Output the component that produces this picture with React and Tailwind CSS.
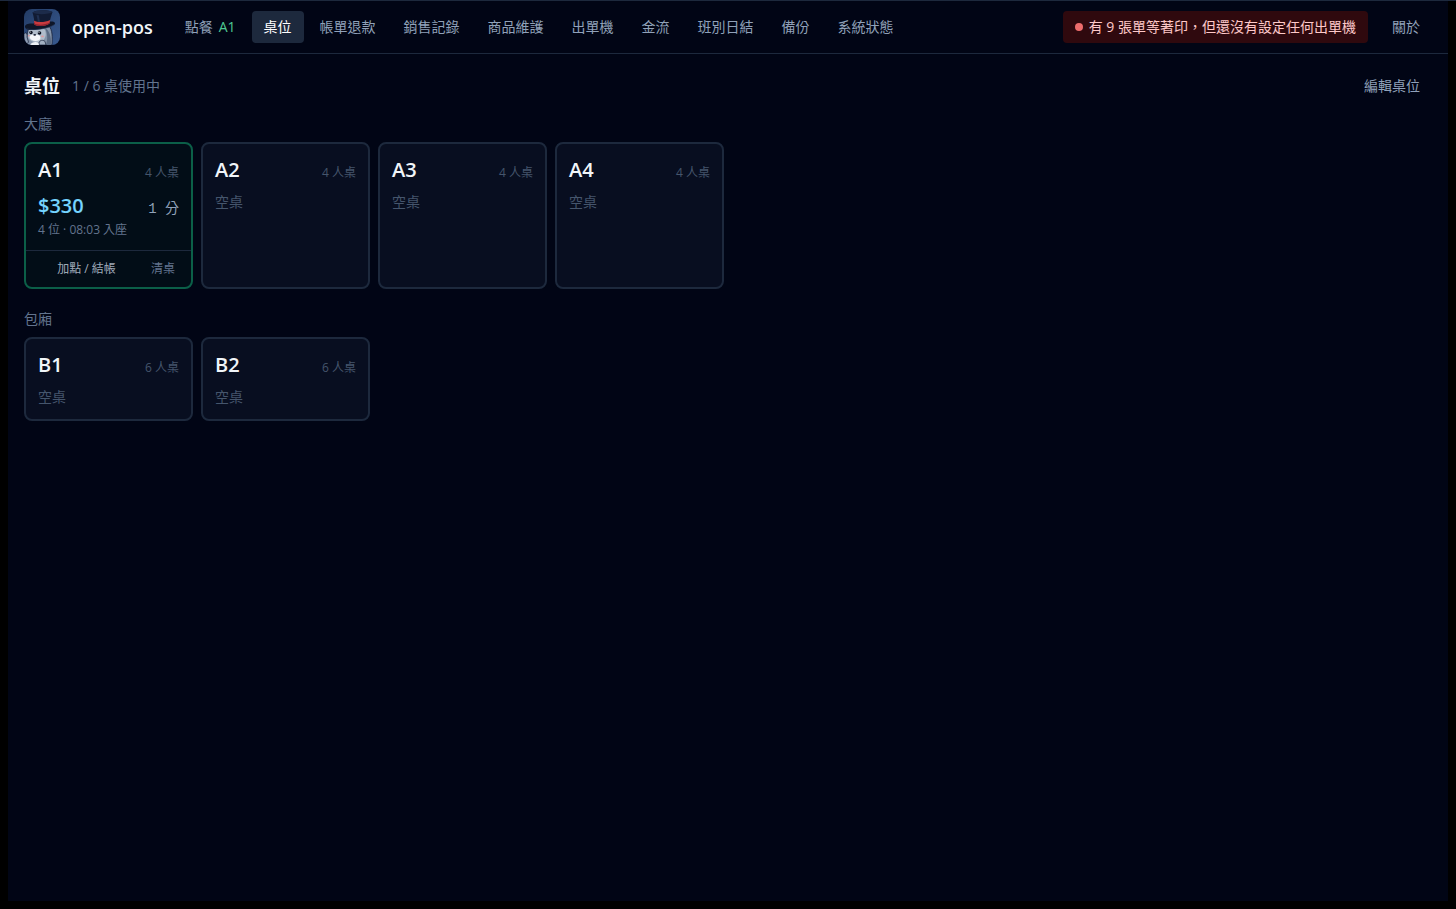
import React, { useState } from "react";

const navItems = [
  { id: "order", label: "點餐", tag: "A1" },
  { id: "tables", label: "桌位" },
  { id: "refund", label: "帳單退款" },
  { id: "sales", label: "銷售記錄" },
  { id: "products", label: "商品維護" },
  { id: "printers", label: "出單機" },
  { id: "cash", label: "金流" },
  { id: "shift", label: "班別日結" },
  { id: "backup", label: "備份" },
  { id: "status", label: "系統狀態" },
];

const areas = [
  {
    name: "大廳",
    tables: [
      { name: "A1", seats: 4, order: { total: 330, minutes: 1, guests: 4, since: "08:03" } },
      { name: "A2", seats: 4 },
      { name: "A3", seats: 4 },
      { name: "A4", seats: 4 },
    ],
  },
  {
    name: "包廂",
    tables: [
      { name: "B1", seats: 6 },
      { name: "B2", seats: 6 },
    ],
  },
];

function Logo() {
  return (
    <svg viewBox="0 0 36 36" className="size-9 shrink-0 rounded-lg" aria-hidden="true">
      <defs>
        <linearGradient id="sky" x1="0" y1="0" x2="1" y2="1">
          <stop offset="0" stopColor="#233c66" />
          <stop offset="1" stopColor="#38598f" />
        </linearGradient>
      </defs>
      <rect width="36" height="36" fill="url(#sky)" />
      {/* body and head */}
      <path d="M3 36 C2 29 3 22 6 18 L25 17 C28.500 21 28.500 28 28 36 Z" fill="#8493a9" stroke="#17213a" strokeWidth="0.800" />
      <path d="M21 19 C25 21 27.500 27 27 36 L22 36 C24 30 23.500 24 21 19 Z" fill="#5b6b84" />
      <path d="M5 20 C9 18 18 18 21 21 C23 26 21 31 17 32.500 C11 34 6 33 4 28 Z" fill="#b0bccb" />
      <path d="M5.500 28 C6.500 25.500 9.500 25 11 26.200 C13 25 16.500 26 16.500 29 C16 33 6.500 33 5.500 28 Z" fill="#f4f6fa" />
      <path d="M6 36 C8 32 15 32 17 36 Z" fill="#edf1f6" />
      {/* face */}
      <circle cx="7" cy="23.500" r="1.700" fill="#0b1122" />
      <circle cx="15.500" cy="24" r="1.800" fill="#0b1122" />
      <circle cx="6.600" cy="22.900" r="0.500" fill="#fff" />
      <circle cx="15" cy="23.400" r="0.500" fill="#fff" />
      <ellipse cx="10.700" cy="25.800" rx="1.400" ry="0.900" fill="#1a2136" />
      <ellipse cx="4.800" cy="26.800" rx="1.100" ry="0.800" fill="#e3989e" />
      <ellipse cx="18.500" cy="27.300" rx="1.400" ry="0.900" fill="#e3989e" />
      {/* paws */}
      <path d="M0 25 C2 22.500 3.500 24.500 3 28 L4.500 33 L3 35 C1 33 0 30 0 28 Z" fill="#8f9db2" stroke="#17213a" strokeWidth="0.700" />
      <path d="M15 34 C15.500 31 19 30.500 21 32.500 L22 36 L15.500 36 Z" fill="#a4b1c3" stroke="#17213a" strokeWidth="0.700" />
      {/* top hat */}
      <path d="M1 17.500 C1 15 5 14 9.500 14.500 L26 12.500 C30 12 32 13.500 30.500 15.500 C27 19 9 22.500 3 20.500 C1.500 19.500 1 18.500 1 17.500 Z" fill="#0e1629" />
      <path d="M8.500 3.500 C9.500 7 10.500 11 10.500 16 C14 18.500 22 18 25.500 14.500 C26 10 27.500 6 28.500 3 C25 0.500 12 0.500 8.500 3.500 Z" fill="#111b33" />
      <path d="M8.500 3.500 C12 0.800 25 0.500 28.500 3 C25 5.500 13 6 8.500 3.500 Z" fill="#1c2b4a" />
      <path d="M12.500 6 L14 12.800 L16 13 L14.800 6.300 Z" fill="#1f2f50" />
      <path d="M10 11.800 C14 13.800 21 13.500 26.200 11 L25.500 14.500 C21 17.500 14 17.800 10.500 15.800 Z" fill="#c93a3f" />
      <path d="M10.300 14.500 C14 16.300 21 16 25.700 13.500 L25.500 14.700 C21 17.500 14 17.800 10.500 15.800 Z" fill="#8f2430" />
      <path d="M2.500 19.800 C10 21.800 24 19.800 30 15.800" fill="none" stroke="#283a5d" strokeWidth="0.600" />
    </svg>
  );
}

function TableCard({ table }) {
  const { order } = table;

  const head = (
    <span className="flex items-baseline justify-between">
      <span className="text-xl leading-7 font-semibold text-slate-100">{table.name}</span>
      <span className="text-xs text-slate-600">{table.seats} 人桌</span>
    </span>
  );

  if (!order) {
    return (
      <button
        type="button"
        className="flex flex-col items-stretch gap-2 rounded-lg border-2 border-slate-800 bg-slate-900/50 p-3 text-left"
      >
        {head}
        <span className="text-sm text-slate-600">空桌</span>
      </button>
    );
  }

  return (
    <div className="rounded-lg border-2 border-[#0b5f48] bg-[#020d17]">
      <button type="button" className="block w-full p-3 text-left">
        {head}
        <span className="mt-2 flex items-baseline justify-between">
          <span className="text-xl leading-7 font-semibold text-sky-300">${order.total}</span>
          <span className="font-['Liberation_Mono','Noto_Sans_CJK_TC',monospace] text-sm text-slate-400">
            {order.minutes} 分
          </span>
        </span>
        <span className="mt-0.5 block text-xs text-slate-500">
          {order.guests} 位 · {order.since} 入座
        </span>
      </button>
      <div className="flex gap-3 border-t border-slate-800 px-3 text-xs">
        <button type="button" className="flex-1 py-2.5 text-slate-300/80">
          加點 / 結帳
        </button>
        <button type="button" className="px-1 py-2.5 text-slate-500">
          清桌
        </button>
      </div>
    </div>
  );
}

export default function App() {
  const [page, setPage] = useState("tables");

  const allTables = areas.flatMap((area) => area.tables);
  const inUse = allTables.filter((t) => t.order).length;

  return (
    <div className="flex min-h-screen flex-col border-t border-slate-800 bg-black px-2 pb-2 font-['Open_Sans','Noto_Sans_CJK_TC',sans-serif]">
      <div className="flex-1 bg-[#010515] text-slate-100">
        <header className="flex items-center border-b border-slate-800 px-4 py-2">
          <Logo />
          <span className="ml-3 text-lg font-semibold">open-pos</span>
          <nav className="ml-5 flex gap-1 text-sm">
            {navItems.map((item) => (
              <button
                key={item.id}
                type="button"
                onClick={() => setPage(item.id)}
                className={
                  page === item.id
                    ? "rounded bg-slate-800 px-3 py-1.5 whitespace-nowrap text-white"
                    : "rounded px-3 py-1.5 whitespace-nowrap text-slate-400"
                }
              >
                {item.label}
                {item.tag && <span className="ml-1.5 text-[#4fc993]">{item.tag}</span>}
              </button>
            ))}
          </nav>
          <div className="ml-auto flex items-center gap-3 text-sm whitespace-nowrap">
            <button
              type="button"
              className="flex items-center gap-1.5 rounded bg-[#2f090e] px-3 py-1.5 text-red-200"
            >
              <span className="size-2 rounded-full bg-[#ec6c6c]" />
              有 9 張單等著印，但還沒有設定任何出單機
            </button>
            <button type="button" className="px-3 py-1.5 text-slate-400">
              關於
            </button>
          </div>
        </header>

        <main className="p-4">
          <div className="flex items-center justify-between">
            <div className="flex items-center gap-3">
              <h1 className="text-lg font-bold">桌位</h1>
              <span className="text-sm text-slate-500">
                {inUse} / {allTables.length} 桌使用中
              </span>
            </div>
            <button type="button" className="px-3 py-1.5 text-sm text-slate-400">
              編輯桌位
            </button>
          </div>

          <div className="mt-3 space-y-5">
            {areas.map((area) => (
              <section key={area.name}>
                <h2 className="mb-2 text-sm text-slate-500">{area.name}</h2>
                <div className="grid grid-cols-[repeat(auto-fill,minmax(160px,1fr))] gap-2">
                  {area.tables.map((table) => (
                    <TableCard key={table.name} table={table} />
                  ))}
                </div>
              </section>
            ))}
          </div>
        </main>
      </div>
    </div>
  );
}
